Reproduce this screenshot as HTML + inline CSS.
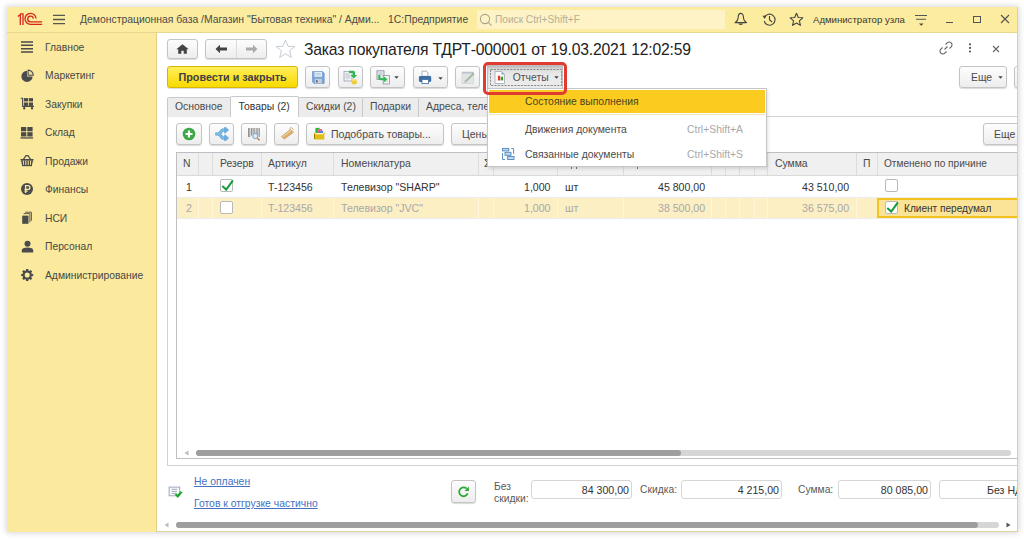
<!DOCTYPE html>
<html><head><meta charset="utf-8">
<style>
*{box-sizing:border-box;margin:0;padding:0}
html,body{width:1024px;height:539px;overflow:hidden;background:#fff;font-family:"Liberation Sans",sans-serif;color:#404040}
div,span,svg{position:absolute}
.t{white-space:nowrap;line-height:1}
#win{left:7px;top:7px;width:1011px;height:525px;background:#fff;box-shadow:0 0 6px 1px rgba(0,0,0,.16)}
.btn{border:1px solid #c4c4c4;border-radius:3px;background:linear-gradient(#fdfdfd,#ededed);box-shadow:0 1px 1px rgba(0,0,0,.15)}
.tab{top:97px;height:20px;border:1px solid #c9c9c9;border-bottom:none;border-radius:2px 2px 0 0;background:#ececec}
.tab .t{top:4px;font-size:10.4px;color:#4a4a4a}
.hc{top:153px;height:22px;border-left:1px solid #dcdcdc}
.ht{top:159px;font-size:10.4px;color:#4a4a4a}
.r1{top:181.5px;font-size:10.6px;color:#333}
.r2{top:203px;font-size:10.6px;color:#a8a8a8}
.cb{width:13px;height:13px;border:1px solid #b9b9b9;border-radius:2px;background:#fff}
.ic{fill:#4b4b4b}
.mi{font-size:10.4px;color:#4a4a4a}
.sc{font-size:10.4px;color:#a8a8a8}
.lnk{font-size:10.4px;color:#4670bf;text-decoration:underline}
.inp{top:480px;height:19px;border:1px solid #d6d6d6;border-radius:3px;background:#fff}
.inp .t{right:2px;top:4px;font-size:10.6px;color:#333}
.lbl{font-size:10.3px;color:#5a5a5a}
</style></head>
<body>
<div id="win"></div>
<div id="clip" style="left:0;top:0;width:1024px;height:539px;clip-path:inset(7px 6px 7px 7px)">
<!-- top bar -->
<div style="left:7px;top:7px;width:1011px;height:26px;background:#fbec9f;border-bottom:1px solid #e5d690"></div>
<svg style="left:15px;top:11px" width="30" height="17" viewBox="0 0 30 17">
  <g fill="none" stroke="#d9261c" stroke-width="1.3">
    <path d="M2.9 5.6 L5.3 3.6 V14"/><path d="M5.3 2.9 H8 M8 2.3 V14"/>
    <path d="M21 7.6 A5.5 5.5 0 1 0 15.5 13.3 H27.2"/>
    <path d="M18.3 7.6 A2.8 2.8 0 1 0 15.5 10.8 H27.2"/>
  </g>
</svg>
<svg style="left:52px;top:13px" width="14" height="12" viewBox="0 0 14 12"><g stroke="#56564f" stroke-width="1.4"><path d="M1 2.4H13M1 6.5H13M1 10.6H13"/></g></svg>
<div class="t" style="left:80px;top:15px;font-size:10.4px;color:#4a4a4a">Демонстрационная база /Магазин "Бытовая техника" / Адми...</div>
<div class="t" style="left:388px;top:15px;font-size:10.4px;color:#4a4a4a">1С:Предприятие</div>
<div style="left:477px;top:9.5px;width:248px;height:19px;background:#fdf3c6"></div>
<svg style="left:479px;top:13px" width="14" height="14" viewBox="0 0 14 14"><g fill="none" stroke="#a9a38a" stroke-width="1.1"><circle cx="6" cy="6" r="4.6"/><path d="M9.3 9.3 L12.6 12.6"/></g></svg>
<div class="t" style="left:495px;top:15px;font-size:10.15px;color:#b5af95">Поиск Ctrl+Shift+F</div>
<svg style="left:734px;top:12px" width="14" height="15" viewBox="0 0 14 15"><path d="M6.8 1.4 C4.6 1.4 4.1 4 4.1 6 C4.1 8.4 2.6 9.6 1.1 10.6 H12.5 C11 9.6 9.5 8.4 9.5 6 C9.5 4 9 1.4 6.8 1.4 Z" fill="none" stroke="#444" stroke-width="1.1" stroke-linejoin="round"/><path d="M4.3 11.4 H9.3 Q6.8 14.6 4.3 11.4 Z" fill="#444"/></svg>
<svg style="left:762px;top:12px" width="15" height="15" viewBox="0 0 15 15"><g fill="none" stroke="#444" stroke-width="1.1"><path d="M2.5 5.5 A5.5 5.5 0 1 1 2.2 9"/><path d="M7.5 4 V7.7 L10 10"/></g><path d="M0.5 3.8 L4.3 3.6 L2.8 7 Z" fill="#444"/></svg>
<svg style="left:789px;top:12px" width="15" height="15" viewBox="0 0 15 15"><path d="M7.5 1.2 L9.3 5.5 L13.8 5.8 L10.4 8.8 L11.4 13.4 L7.5 11 L3.6 13.4 L4.6 8.8 L1.2 5.8 L5.7 5.5 Z" fill="none" stroke="#444" stroke-width="1.1" stroke-linejoin="round"/></svg>
<div class="t" style="left:813px;top:15px;font-size:9.6px;color:#383838">Администратор узла</div>
<svg style="left:914px;top:13px" width="14" height="14" viewBox="0 0 14 14"><g stroke="#555" stroke-width="1.1"><path d="M1 2.5H13M2 6.2H12"/></g><path d="M5 10.5H9.5L7.25 12.8Z" fill="#444"/></svg>
<div style="left:946px;top:22px;width:7px;height:1px;background:#555"></div>
<div style="left:973px;top:16px;width:8px;height:7px;border:1.2px solid #555"></div>
<svg style="left:1000px;top:14px" width="10" height="10" viewBox="0 0 10 10"><path d="M1 1L9 9M9 1L1 9" stroke="#555" stroke-width="1.1"/></svg>

<!-- sidebar -->
<div style="left:7px;top:33px;width:150px;height:499px;background:#fbea9d;border-right:1px solid #e0cf85"></div>
<svg style="left:21px;top:41px" width="12" height="12" viewBox="0 0 12 12"><g stroke="#4b4b4b" stroke-width="1.6"><path d="M0 1H12M0 4.3H12M0 7.7H12M0 11H12"/></g></svg>
<svg style="left:21px;top:69px" width="14" height="14" viewBox="0 0 14 14"><path class="ic" d="M6 1.8 A5.6 5.6 0 1 0 11.6 7.4 H6 Z"/><path d="M7.1 1.1 A5.2 5.2 0 0 1 12.3 6.3 H7.1 Z" fill="#e9dca0" stroke="#4b4b4b" stroke-width="1.1" stroke-linejoin="round"/></svg>
<svg style="left:20px;top:97px" width="15" height="14" viewBox="0 0 15 14"><g class="ic"><rect x="3.9" y="1.1" width="4.2" height="3.3"/><rect x="8.9" y="1.1" width="4.1" height="3.3"/><rect x="3.9" y="5.5" width="4.2" height="3.4"/><rect x="8.9" y="5.5" width="4.1" height="3.4"/><rect x="3.1" y="10" width="2.2" height="2.6" rx="1"/><rect x="10.9" y="10" width="2.2" height="2.6" rx="1"/></g><path d="M0.7 1.3 H2.6 V9.4 H14" fill="none" stroke="#4b4b4b" stroke-width="1.1"/></svg>
<svg style="left:20px;top:126px" width="14" height="13" viewBox="0 0 14 13"><g class="ic"><rect x="1" y="1" width="5.3" height="4.3"/><rect x="7.3" y="1" width="5.3" height="4.3"/><rect x="1" y="6.2" width="5.3" height="4.3"/><rect x="7.3" y="6.2" width="5.3" height="4.3"/><rect x="0.5" y="11.3" width="12.6" height="1.3"/></g></svg>
<svg style="left:20px;top:154px" width="14" height="13" viewBox="0 0 14 13"><path d="M3.3 5.5 L6 1.6 H8 L10.7 5.5" fill="none" stroke="#4b4b4b" stroke-width="1.3"/><path class="ic" d="M0.5 5 H13.5 V6.6 H0.5 Z"/><g class="ic"><path d="M1 6.5 H2.8 L3.2 11 H2 Z"/><rect x="3.9" y="6.5" width="1.4" height="4.6"/><rect x="6.3" y="6.5" width="1.4" height="4.6"/><rect x="8.7" y="6.5" width="1.4" height="4.6"/><path d="M11.2 6.5 H13 L12 11 H10.8 Z"/><rect x="2" y="11" width="10" height="1.2"/></g></svg>
<svg style="left:20px;top:182px" width="14" height="14" viewBox="0 0 14 14"><circle class="ic" cx="7" cy="7" r="6"/><path d="M5.6 11 V3.6 H8 A1.9 1.9 0 0 1 8 7.4 H4.5 M4.5 9.2 H7.6" fill="none" stroke="#fbea9d" stroke-width="1.3"/></svg>
<svg style="left:21px;top:211px" width="13" height="14" viewBox="0 0 13 14"><path d="M4.2 1.2 H10.4 V9.8" fill="none" stroke="#4b4b4b" stroke-width="0.9"/><path d="M2.7 2.6 H8.9 V11.3" fill="none" stroke="#4b4b4b" stroke-width="0.9"/><rect class="ic" x="1.2" y="4.6" width="6.3" height="8.2"/></svg>
<svg style="left:21px;top:240px" width="13" height="13" viewBox="0 0 13 13"><circle class="ic" cx="6.5" cy="3.8" r="3"/><path class="ic" d="M0.8 12.5 V10.5 C0.8 8.5 3 7.6 6.5 7.6 C10 7.6 12.2 8.5 12.2 10.5 V12.5 Z"/></svg>
<svg style="left:20px;top:268px" width="15" height="15" viewBox="0 0 15 15"><g transform="translate(7.2 7)"><g fill="#4b4b4b"><path d="M-1.1 -6 H1.1 L1.5 -3 H-1.5 Z" transform="rotate(0)"/><path d="M-1.1 -6 H1.1 L1.5 -3 H-1.5 Z" transform="rotate(45)"/><path d="M-1.1 -6 H1.1 L1.5 -3 H-1.5 Z" transform="rotate(90)"/><path d="M-1.1 -6 H1.1 L1.5 -3 H-1.5 Z" transform="rotate(135)"/><path d="M-1.1 -6 H1.1 L1.5 -3 H-1.5 Z" transform="rotate(180)"/><path d="M-1.1 -6 H1.1 L1.5 -3 H-1.5 Z" transform="rotate(225)"/><path d="M-1.1 -6 H1.1 L1.5 -3 H-1.5 Z" transform="rotate(270)"/><path d="M-1.1 -6 H1.1 L1.5 -3 H-1.5 Z" transform="rotate(315)"/></g><circle r="3.5" fill="none" stroke="#4b4b4b" stroke-width="1.9"/></g></svg>
<div class="t" style="left:45px;top:42.8px;font-size:10.3px;color:#474747">Главное</div>
<div class="t" style="left:45px;top:71.3px;font-size:10.3px;color:#474747">Маркетинг</div>
<div class="t" style="left:45px;top:99.8px;font-size:10.3px;color:#474747">Закупки</div>
<div class="t" style="left:45px;top:128.3px;font-size:10.3px;color:#474747">Склад</div>
<div class="t" style="left:45px;top:156.8px;font-size:10.3px;color:#474747">Продажи</div>
<div class="t" style="left:45px;top:185.2px;font-size:10.3px;color:#474747">Финансы</div>
<div class="t" style="left:45px;top:213.7px;font-size:10.3px;color:#474747">НСИ</div>
<div class="t" style="left:45px;top:242.2px;font-size:10.3px;color:#474747">Персонал</div>
<div class="t" style="left:45px;top:270.7px;font-size:10.3px;color:#474747">Администрирование</div>

<!-- form header -->
<div class="btn" style="left:167px;top:39px;width:31px;height:20px"></div>
<svg style="left:176px;top:44px" width="13" height="10" viewBox="0 0 13 10"><path d="M6.5 0.3 L12.7 5.3 H10.8 V9.8 H7.7 V6.8 H5.3 V9.8 H2.2 V5.3 H0.3 Z" fill="#444"/></svg>
<div class="btn" style="left:205px;top:39px;width:62px;height:20px"></div>
<div style="left:236px;top:40px;width:1px;height:18px;background:#dadada"></div>
<svg style="left:215px;top:44px" width="13" height="10" viewBox="0 0 13 10"><path d="M0.5 5 L5 0.8 V3.6 H12 V6.4 H5 V9.2 Z" fill="#444"/></svg>
<svg style="left:245px;top:44px" width="13" height="10" viewBox="0 0 13 10"><path d="M12.5 5 L8 0.8 V3.6 H1 V6.4 H8 V9.2 Z" fill="#aaa"/></svg>
<svg style="left:275px;top:39px" width="21" height="20" viewBox="0 0 21 20"><path d="M10.5 1 L13.1 7.3 L19.8 7.6 L14.6 11.8 L16.3 18.5 L10.5 14.8 L4.7 18.5 L6.4 11.8 L1.2 7.6 L7.9 7.3 Z" fill="none" stroke="#c5ccd4" stroke-width="1" stroke-linejoin="round"/></svg>
<div class="t" style="left:304px;top:41.8px;font-size:15.7px;letter-spacing:-0.19px;color:#222">Заказ покупателя ТДРТ-000001 от 19.03.2021 12:02:59</div>
<svg style="left:938px;top:40px" width="16" height="16" viewBox="0 0 16 16"><g fill="none" stroke="#666" stroke-width="1.1"><path d="M6.5 9.5 L9.5 6.5"/><path d="M7.5 4.5 L9.2 2.8 A2.5 2.5 0 0 1 13.2 6.8 L11.5 8.5"/><path d="M8.5 11.5 L6.8 13.2 A2.5 2.5 0 0 1 2.8 9.2 L4.5 7.5"/></g></svg>
<svg style="left:968px;top:43px" width="4" height="10" viewBox="0 0 4 10"><g fill="#555"><circle cx="2" cy="1.3" r="1.1"/><circle cx="2" cy="4.9" r="1.1"/><circle cx="2" cy="8.5" r="1.1"/></g></svg>
<svg style="left:992px;top:45px" width="8" height="8" viewBox="0 0 8 8"><path d="M1 1L7 7M7 1L1 7" stroke="#666" stroke-width="1.1"/></svg>

<!-- command bar -->
<div style="left:167px;top:66px;width:131px;height:22px;border:1px solid #d6b600;border-radius:3px;background:linear-gradient(#ffee5c,#f9da00);box-shadow:0 1px 1px rgba(0,0,0,.15)"></div>
<div class="t" style="left:178.5px;top:71.7px;font-size:10.8px;font-weight:bold;color:#404046">Провести и закрыть</div>
<div class="btn" style="left:305px;top:66px;width:25px;height:22px"></div>
<svg style="left:312px;top:71px" width="13" height="13" viewBox="0 0 13 13"><path d="M0.5 0.5 H10.5 L12.2 2.2 V12.4 H2 L0.5 10.9 Z" fill="#7ba6da" stroke="#5f8cc4" stroke-width="0.6"/><rect x="2.4" y="0.9" width="7.6" height="4.9" fill="#e3ecf6"/><path d="M3.4 2.5H9M3.4 4H9" stroke="#a9c1dd" stroke-width="0.7"/><rect x="2.9" y="7.9" width="6.8" height="4.5" fill="#c9cfd5"/><rect x="4" y="9.2" width="1.6" height="2.2" fill="#59626c"/></svg>
<div class="btn" style="left:338px;top:66px;width:25px;height:22px"></div>
<svg style="left:343px;top:70px" width="15" height="15" viewBox="0 0 15 15"><rect x="1" y="1.5" width="8" height="9.5" fill="#eef1f5" stroke="#8d99a8" stroke-width="0.7"/><path d="M2.5 4H6.5M2.5 6H7.5M2.5 8H7" stroke="#a4acb5" stroke-width="0.7"/><path d="M6 0.8 H10.3 Q12 0.8 12 2.5 V5 H14.2 L10.9 8.6 L7.6 5 H9.7 V3.1 H6 Z" fill="#2fb84f"/><path d="M8.6 10 V13.3 A2.6 1.1 0 0 0 13.8 13.3 V10 Z" fill="#eecb35"/><ellipse cx="11.2" cy="10" rx="2.6" ry="1.1" fill="#f8e27c"/></svg>
<div class="btn" style="left:370px;top:66px;width:35px;height:22px"></div>
<svg style="left:376px;top:70px" width="15" height="15" viewBox="0 0 15 15"><rect x="1" y="0.8" width="7" height="8.5" fill="#e9edf2" stroke="#7b8796" stroke-width="0.8"/><path d="M2.5 3H6.5M2.5 4.6H6" stroke="#9aa4ae" stroke-width="0.6"/><rect x="7.2" y="5.5" width="6.3" height="8.5" fill="#f4f4f4" stroke="#8c96a2" stroke-width="0.8"/><path d="M9 9H12M9 11H12" stroke="#a8b0b8" stroke-width="0.6"/><path d="M2.3 5 H4.3 V7 Q4.3 8.3 5.6 8.3 H7.8 V6.2 L11.2 9.3 L7.8 12.4 V10.3 H5.3 Q2.3 10.3 2.3 7.3 Z" fill="#2fb84f"/></svg>
<svg style="left:394px;top:76px" width="5" height="3" viewBox="0 0 5 3"><path d="M0.3 0.3H4.7L2.5 2.8Z" fill="#444"/></svg>
<div class="btn" style="left:413px;top:66px;width:35px;height:22px"></div>
<svg style="left:418px;top:70px" width="15" height="15" viewBox="0 0 15 15"><path d="M4 1.2 H8.3 L10 2.9 V6.2 H4 Z" fill="#fff" stroke="#8a939d" stroke-width="0.7"/><rect x="0.9" y="6" width="12.3" height="6" rx="1.4" fill="#3e6da4"/><rect x="4" y="9.6" width="6.4" height="4" fill="#fff" stroke="#3e6da4" stroke-width="0.8"/></svg>
<svg style="left:437.5px;top:76.5px" width="5" height="3" viewBox="0 0 5 3"><path d="M0.3 0.3H4.7L2.5 2.8Z" fill="#444"/></svg>
<div class="btn" style="left:455px;top:66px;width:25px;height:22px"></div>
<svg style="left:461px;top:70px" width="14" height="14" viewBox="0 0 14 14"><rect x="1" y="2" width="11.4" height="11.4" fill="#e2e5e8" stroke="#c8ccd0" stroke-width="0.6"/><rect x="1" y="2" width="11.4" height="1.6" fill="#bcc4cc"/><path d="M3.5 12.5 L4 10.5 L10.8 3.7 L12.4 5.3 L5.6 12.1 Z" fill="#a8c0a2"/><path d="M10.8 3.7 L11.8 2.7 L13.4 4.3 L12.4 5.3 Z" fill="#9aa3ab"/><path d="M3.5 12.5 L4 10.5 L5.6 12.1 Z" fill="#c9b79a"/></svg>
<!-- Reports pressed button -->
<div style="left:487px;top:65px;width:76px;height:24px;border:1px solid #bdbdbd;background:linear-gradient(#d6d6d6,#e9e9e9 40%,#ececec);box-shadow:inset 0 2px 2px rgba(0,0,0,.12)"></div>
<svg style="left:489px;top:68px" width="74" height="19" viewBox="0 0 74 19"><rect x="1.5" y="1.5" width="71" height="16" fill="none" stroke="#8a8a8a" stroke-width="1" stroke-dasharray="2.2 1.1"/></svg>
<svg style="left:494px;top:71px" width="12" height="13" viewBox="0 0 12 13"><path d="M1 0.5 H7.5 L10.5 3.5 V12.5 H1 Z" fill="#fff" stroke="#a4afbb" stroke-width="0.9"/><path d="M7.5 0.5 V3.5 H10.5 Z" fill="#95a4b5"/><path d="M3.2 4 V9.4 H9.5" fill="none" stroke="#d8c4c4" stroke-width="0.5"/><rect x="4" y="4.8" width="2.2" height="4.5" fill="#e8322a"/><rect x="6.8" y="5.7" width="2.2" height="3.6" fill="#3aa02a"/></svg>
<div class="t" style="left:512.7px;top:73px;font-size:10.4px;color:#505050">Отчеты</div>
<svg style="left:554px;top:76px" width="5" height="3" viewBox="0 0 5 3"><path d="M0.3 0.3H4.7L2.5 2.8Z" fill="#444"/></svg>
<div class="btn" style="left:959px;top:66px;width:48px;height:22px"></div>
<div class="t" style="left:971px;top:73px;font-size:10.4px;color:#4a4a4a">Еще</div>
<svg style="left:998px;top:76px" width="5" height="3" viewBox="0 0 5 3"><path d="M0.3 0.3H4.7L2.5 2.8Z" fill="#444"/></svg>
<div class="btn" style="left:1014px;top:66px;width:20px;height:22px"></div>

<!-- tabs -->
<div style="left:167px;top:116px;width:851px;height:350px;border:1px solid #d2d2d2;border-right:none;background:#fff"></div>
<div class="tab" style="left:167px;width:64px"><div class="t" style="left:7px">Основное</div></div>
<div class="tab" style="left:230px;width:69px;background:#fff;top:96px;height:21px"><div class="t" style="left:7.5px;top:5px;color:#333">Товары (2)</div></div>
<div class="tab" style="left:298px;width:65px"><div class="t" style="left:7px">Скидки (2)</div></div>
<div class="tab" style="left:362px;width:57px"><div class="t" style="left:7px">Подарки</div></div>
<div class="tab" style="left:418px;width:90px"><div class="t" style="left:7px">Адреса, телефоны</div></div>

<!-- table toolbar -->
<div class="btn" style="left:176px;top:123px;width:26px;height:22px"></div>
<svg style="left:182px;top:127px" width="14" height="14" viewBox="0 0 14 14"><circle cx="7" cy="7" r="6.3" fill="#3aa845"/><path d="M7 3.5V10.5M3.5 7H10.5" stroke="#fff" stroke-width="2.2"/></svg>
<div class="btn" style="left:209px;top:123px;width:25px;height:22px"></div>
<svg style="left:214px;top:127px" width="15" height="14" viewBox="0 0 15 14"><g fill="none" stroke-linejoin="round"><path d="M1.3 7 H5 L8.6 3 H11.5 M5 7 L8.6 11 H11.5" stroke="#4d98cf" stroke-width="3"/><path d="M1.3 7 H5 L8.6 3 H11.5 M5 7 L8.6 11 H11.5" stroke="#82c3ec" stroke-width="1.6"/></g><path d="M10.8 -0.2 L14.6 3 L10.8 6.2 Z M10.8 7.8 L14.6 11 L10.8 14.2 Z" fill="#6fb5e4" stroke="#4d98cf" stroke-width="0.7"/></svg>
<div class="btn" style="left:241px;top:123px;width:26px;height:22px"></div>
<svg style="left:247px;top:127px" width="14" height="14" viewBox="0 0 14 14"><g stroke="#666" stroke-width="0.7"><path d="M1.5 1V10M2.8 1V10M4.5 1V8.5M6 1V7M7.3 1V6.5M9.2 1V7M10.8 1V8.5M12.3 1V10"/></g><circle cx="8.3" cy="9" r="2.6" fill="#dce9f6" stroke="#7e9fc4" stroke-width="1"/><path d="M10.2 11 L12.6 13.4" stroke="#c49058" stroke-width="1.6"/></svg>
<div class="btn" style="left:274px;top:123px;width:25px;height:22px"></div>
<svg style="left:280px;top:126px" width="15" height="15" viewBox="0 0 15 15"><path d="M1.5 10.5 L10.5 3.5 L13.5 6.3 L4.3 13 Z" fill="#deb070" stroke="#c99550" stroke-width="0.7"/><path d="M2.5 10.8 L11 4.5" stroke="#f4dcb0" stroke-width="1"/><path d="M9.5 2.6 L11.3 1.5 L13.5 3.6" fill="none" stroke="#d9a860" stroke-width="1"/></svg>
<div class="btn" style="left:306px;top:123px;width:138px;height:22px"></div>
<svg style="left:313px;top:127px" width="13" height="13" viewBox="0 0 13 13"><rect x="2.4" y="0.9" width="4.2" height="5.6" fill="#22bf3a"/><rect x="5" y="2" width="4" height="4.5" fill="#ee6c7e"/><rect x="5.8" y="3.8" width="4.3" height="2.3" fill="#5a7fe0"/><path d="M0.6 5.2 L2 6.3 H10.6 L11.6 5.4 L12 6.6 L11.3 7.4 V12.5 H2 L1 11.6 V6.6 Z" fill="#e2bd12"/><rect x="2.2" y="6" width="8.2" height="1.3" fill="#fff8d8"/><path d="M1 6.6 L2 7.3 V12.5 L1 11.6 Z" fill="#a67e0c"/></svg>
<div class="t" style="left:331px;top:129px;font-size:10.5px;color:#4a4a4a">Подобрать товары...</div>
<div class="btn" style="left:451px;top:123px;width:60px;height:22px"></div>
<div class="t" style="left:462px;top:129px;font-size:10.5px;color:#4a4a4a">Цены...</div>
<div class="btn" style="left:983px;top:123px;width:40px;height:22px"></div>
<div class="t" style="left:994px;top:129px;font-size:10.5px;color:#4a4a4a">Еще</div>

<!-- table -->
<div style="left:176px;top:152px;width:842px;height:307px;border:1px solid #bfbfbf;border-right:none;background:#fff"></div>
<div style="left:177px;top:153px;width:841px;height:23px;background:#f0f0f0;border-bottom:1px solid #dadada"></div>
<div class="hc" style="left:198px"></div><div class="hc" style="left:212px"></div><div class="hc" style="left:261px"></div><div class="hc" style="left:333px"></div><div class="hc" style="left:478px"></div><div class="hc" style="left:493px"></div><div class="hc" style="left:557px"></div><div class="hc" style="left:623px"></div><div class="hc" style="left:711px"></div><div class="hc" style="left:725px"></div><div class="hc" style="left:739px"></div><div class="hc" style="left:754px"></div><div class="hc" style="left:767px"></div><div class="hc" style="left:856px"></div><div class="hc" style="left:877px"></div>
<div class="t ht" style="left:183px">N</div>
<div class="t ht" style="left:220px">Резерв</div>
<div class="t ht" style="left:268px">Артикул</div>
<div class="t ht" style="left:341px">Номенклатура</div>
<div class="t ht" style="left:484px">Σ</div>
<div class="t ht" style="left:775px">Сумма</div>
<div class="t ht" style="left:863px">П</div>
<div class="t ht" style="left:884px;font-size:10.1px">Отменено по причине</div>
<!-- row1 -->
<div style="left:177px;top:197px;width:841px;height:1px;background:#ececec"></div>
<div class="t r1" style="left:186px">1</div>
<div class="cb" style="left:220px;top:179px"></div>
<svg style="left:220px;top:175px" width="16" height="16" viewBox="0 0 16 16"><path d="M2.3 11 L6.2 14.6 L12.9 5.4" fill="none" stroke="#17993c" stroke-width="2"/></svg>
<div class="t r1" style="left:268px">T-123456</div>
<div class="t r1" style="left:341px">Телевизор "SHARP"</div>
<div class="t r1" style="left:524px">1,000</div>
<div class="t r1" style="left:565px">шт</div>
<div class="t r1" style="left:658px">45 800,00</div>
<div class="t r1" style="left:802px">43 510,00</div>
<div class="cb" style="left:885px;top:179px"></div>
<!-- row2 -->
<div style="left:177px;top:198px;width:841px;height:20px;background:#fcefc4"></div>
<div style="left:198px;top:198px;width:1px;height:20px;background:#fff6dd"></div>
<div style="left:212px;top:198px;width:1px;height:20px;background:#fff6dd"></div>
<div style="left:261px;top:198px;width:1px;height:20px;background:#fff6dd"></div>
<div style="left:333px;top:198px;width:1px;height:20px;background:#fff6dd"></div>
<div style="left:478px;top:198px;width:1px;height:20px;background:#fff6dd"></div>
<div style="left:493px;top:198px;width:1px;height:20px;background:#fff6dd"></div>
<div style="left:557px;top:198px;width:1px;height:20px;background:#fff6dd"></div>
<div style="left:623px;top:198px;width:1px;height:20px;background:#fff6dd"></div>
<div style="left:711px;top:198px;width:1px;height:20px;background:#fff6dd"></div>
<div style="left:725px;top:198px;width:1px;height:20px;background:#fff6dd"></div>
<div style="left:739px;top:198px;width:1px;height:20px;background:#fff6dd"></div>
<div style="left:754px;top:198px;width:1px;height:20px;background:#fff6dd"></div>
<div style="left:767px;top:198px;width:1px;height:20px;background:#fff6dd"></div>
<div style="left:856px;top:198px;width:1px;height:20px;background:#fff6dd"></div>
<div style="left:177px;top:218px;width:841px;height:1px;background:#ececec"></div>
<div class="t r2" style="left:186px">2</div>
<div class="cb" style="left:220px;top:201px"></div>
<div class="t r2" style="left:268px">T-123456</div>
<div class="t r2" style="left:341px">Телевизор "JVC"</div>
<div class="t r2" style="left:524px">1,000</div>
<div class="t r2" style="left:565px">шт</div>
<div class="t r2" style="left:658px">38 500,00</div>
<div class="t r2" style="left:802px">36 575,00</div>
<div style="left:877px;top:198px;width:141px;height:20px;background:#fbe397;border:2px solid #f3c21b;border-right:none"></div>
<div class="cb" style="left:885px;top:201px"></div>
<svg style="left:885px;top:197px" width="16" height="16" viewBox="0 0 16 16"><path d="M2.3 11 L6.2 14.6 L12.9 5.4" fill="none" stroke="#17993c" stroke-width="2"/></svg>
<div class="t r1" style="left:904px;top:203.5px;font-size:10.1px">Клиент передумал</div>
<!-- table scroll -->
<svg style="left:184px;top:450px" width="5" height="6" viewBox="0 0 5 6"><path d="M4.5 0.5V5.5L0.5 3Z" fill="#bbb"/></svg>
<div style="left:196px;top:450px;width:815px;height:6px;border-radius:3px;background:#d6d6d6"></div>
<div style="left:196px;top:450px;width:485px;height:6px;border-radius:3px;background:#9e9e9e"></div>

<div style="left:571px;top:167px;width:1px;height:1.5px;background:#777"></div><div style="left:576px;top:167px;width:1px;height:1.5px;background:#777"></div><div style="left:637px;top:167px;width:1px;height:2px;background:#777"></div>
<!-- menu -->
<div style="left:487px;top:88px;width:280px;height:79px;background:#fff;border:1px solid #c6c6c6;box-shadow:1px 2px 3px rgba(0,0,0,.12)"></div>
<div style="left:489px;top:90px;width:276px;height:23px;background:#fbcc1f"></div>
<div style="left:489px;top:114px;width:276px;height:1px;background:#f1e6c0"></div>
<div class="t mi" style="left:525px;top:97.2px;color:#4a4320">Состояние выполнения</div>
<div class="t mi" style="left:525px;top:124.7px">Движения документа</div>
<div class="t sc" style="left:687px;top:124.7px">Ctrl+Shift+A</div>
<svg style="left:501px;top:147px" width="15" height="15" viewBox="0 0 15 15"><g fill="none" stroke="#5a90c4" stroke-width="1"><path d="M10.2 1.5 H12.6 V6.9"/><path d="M1.5 6.2 V12.5 H4"/></g><g fill="#c5d9ee" stroke="#4f88bf" stroke-width="0.9"><rect x="1.5" y="1.5" width="6.3" height="2.4"/><rect x="4" y="5.3" width="6" height="3"/><rect x="6.6" y="9.5" width="6.4" height="3"/></g></svg>
<div class="t mi" style="left:525px;top:150px">Связанные документы</div>
<div class="t sc" style="left:687px;top:150px">Ctrl+Shift+S</div>

<div style="left:483px;top:61.5px;width:84px;height:33.5px;border:3px solid #e03b30;border-radius:5px"></div>
<!-- footer -->
<svg style="left:168px;top:486px" width="16" height="13" viewBox="0 0 16 13"><rect x="1.1" y="1.1" width="10.6" height="8.7" fill="#f8f9fb" stroke="#93a3b8" stroke-width="0.9"/><path d="M3.7 3.3H9M3.7 5.4H9M3.7 7.4H8" stroke="#8d9aab" stroke-width="0.8"/><path d="M7.6 8.1 L9.7 10.3 L13.6 5.7" fill="none" stroke="#20a732" stroke-width="2.2"/></svg>
<div class="t lnk" style="left:194px;top:477px">Не оплачен</div>
<div class="t lnk" style="left:194px;top:499px">Готов к отгрузке частично</div>
<div class="btn" style="left:451px;top:480px;width:25px;height:23px"></div>
<svg style="left:457px;top:485px" width="14" height="14" viewBox="0 0 14 14"><path d="M10.73 8.3 A4.4 4.4 0 1 1 9.6 3.6" fill="none" stroke="#2fa83a" stroke-width="1.8"/><path d="M11.9 1.6 V6.1 H7.6 Z" fill="#2fa83a"/></svg>
<div class="t lbl" style="left:494px;top:482px">Без</div>
<div class="t lbl" style="left:494px;top:494px">скидки:</div>
<div class="inp" style="left:531px;width:101px"><div class="t">84 300,00</div></div>
<div class="t lbl" style="left:640px;top:485px">Скидка:</div>
<div class="inp" style="left:681px;width:101px"><div class="t">4 215,00</div></div>
<div class="t lbl" style="left:798px;top:485px">Сумма:</div>
<div class="inp" style="left:838px;width:93px"><div class="t">80 085,00</div></div>
<div class="inp" style="left:939px;width:100px"><div class="t" style="left:47px;right:auto">Без НДС</div></div>
<!-- bottom scroll -->
<svg style="left:164px;top:522px" width="5" height="6" viewBox="0 0 5 6"><path d="M4.5 0.5V5.5L0.5 3Z" fill="#bbb"/></svg>
<div style="left:176px;top:522px;width:823px;height:6px;border-radius:3px;background:#d6d6d6"></div>
<div style="left:176px;top:522px;width:802px;height:6px;border-radius:3px;background:#9e9e9e"></div>
<svg style="left:1006px;top:522px" width="5" height="6" viewBox="0 0 5 6"><path d="M0.5 0.5V5.5L4.5 3Z" fill="#555"/></svg>
<!-- window clip on right / bottom -->
</div>
<div style="left:1017px;top:7px;width:1px;height:525px;background:#ddd29c"></div>
<div style="left:157px;top:531px;width:861px;height:1px;background:#ddd29c"></div>
</body></html>
